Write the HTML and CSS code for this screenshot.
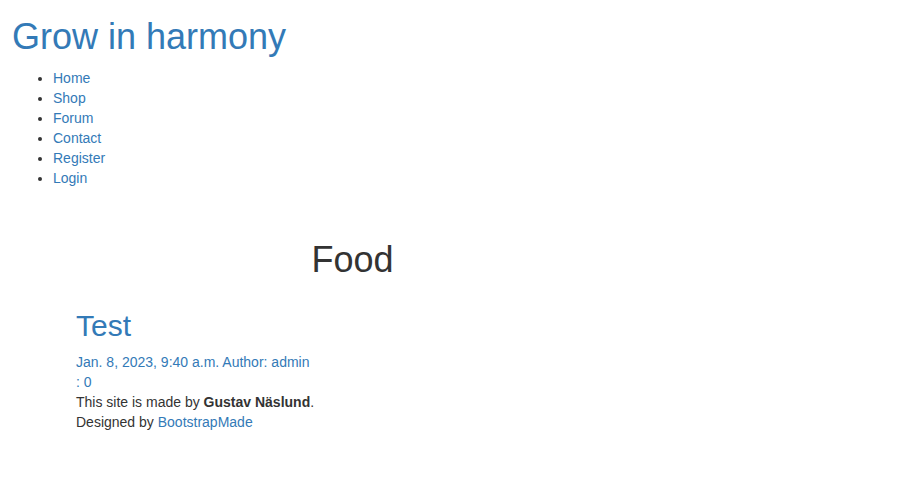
FILE: index.html
```html
<!DOCTYPE html>
<html>
<head>
<meta charset="utf-8">
<title>Grow in harmony</title>
<link rel="stylesheet" href="styles.css">
</head>
<body>
<header class="site-header">
  <h1 class="brand"><a href="#">Grow in harmony</a></h1>
  <ul class="nav-list">
    <li><a href="#">Home</a></li>
    <li><a href="#">Shop</a></li>
    <li><a href="#">Forum</a></li>
    <li><a href="#">Contact</a></li>
    <li><a href="#">Register</a></li>
    <li><a href="#">Login</a></li>
  </ul>
</header>
<main class="content">
  <section class="category">
    <h1 class="category-title">Food</h1>
  </section>
  <article class="post">
    <h2 class="post-title"><a href="#">Test</a></h2>
    <div class="post-meta"><a href="#">Jan. 8, 2023, 9:40 a.m. Author: admin</a></div>
    <div class="post-meta"><a href="#">: 0</a></div>
  </article>
  <footer class="site-footer">
    <div>This site is made by <strong>Gustav Näslund</strong>.</div>
    <div>Designed by <a href="#">BootstrapMade</a></div>
  </footer>
</main>
</body>
</html>
```
FILE: styles.css
```css
html, body {
  margin: 0;
  padding: 0;
  background: #fff;
}
body {
  font-family: "Liberation Sans", Arial, sans-serif;
  font-size: 14px;
  line-height: 20px;
  color: #333;
}
a {
  color: #337ab7;
  text-decoration: none;
}
.site-header {
  padding-left: 12px;
}
.brand {
  font-size: 36px;
  font-weight: 500;
  line-height: 1.1;
  margin: 17px 0 11px;
}
.nav-list {
  margin: 0 0 10px;
  padding-left: 41px;
}
.content {
  padding-left: 76px;
  width: 553px;
}
.category {
  padding-top: 22px;
}
.category-title {
  font-size: 36px;
  font-weight: 500;
  line-height: 1.1;
  margin: 20px 0 10px;
  text-align: center;
}
.post-title {
  font-size: 30px;
  font-weight: 500;
  line-height: 1.1;
  margin: 30px 0 10px;
}
.post-meta {
  line-height: 20px;
}
.site-footer {
  line-height: 20px;
}
```
